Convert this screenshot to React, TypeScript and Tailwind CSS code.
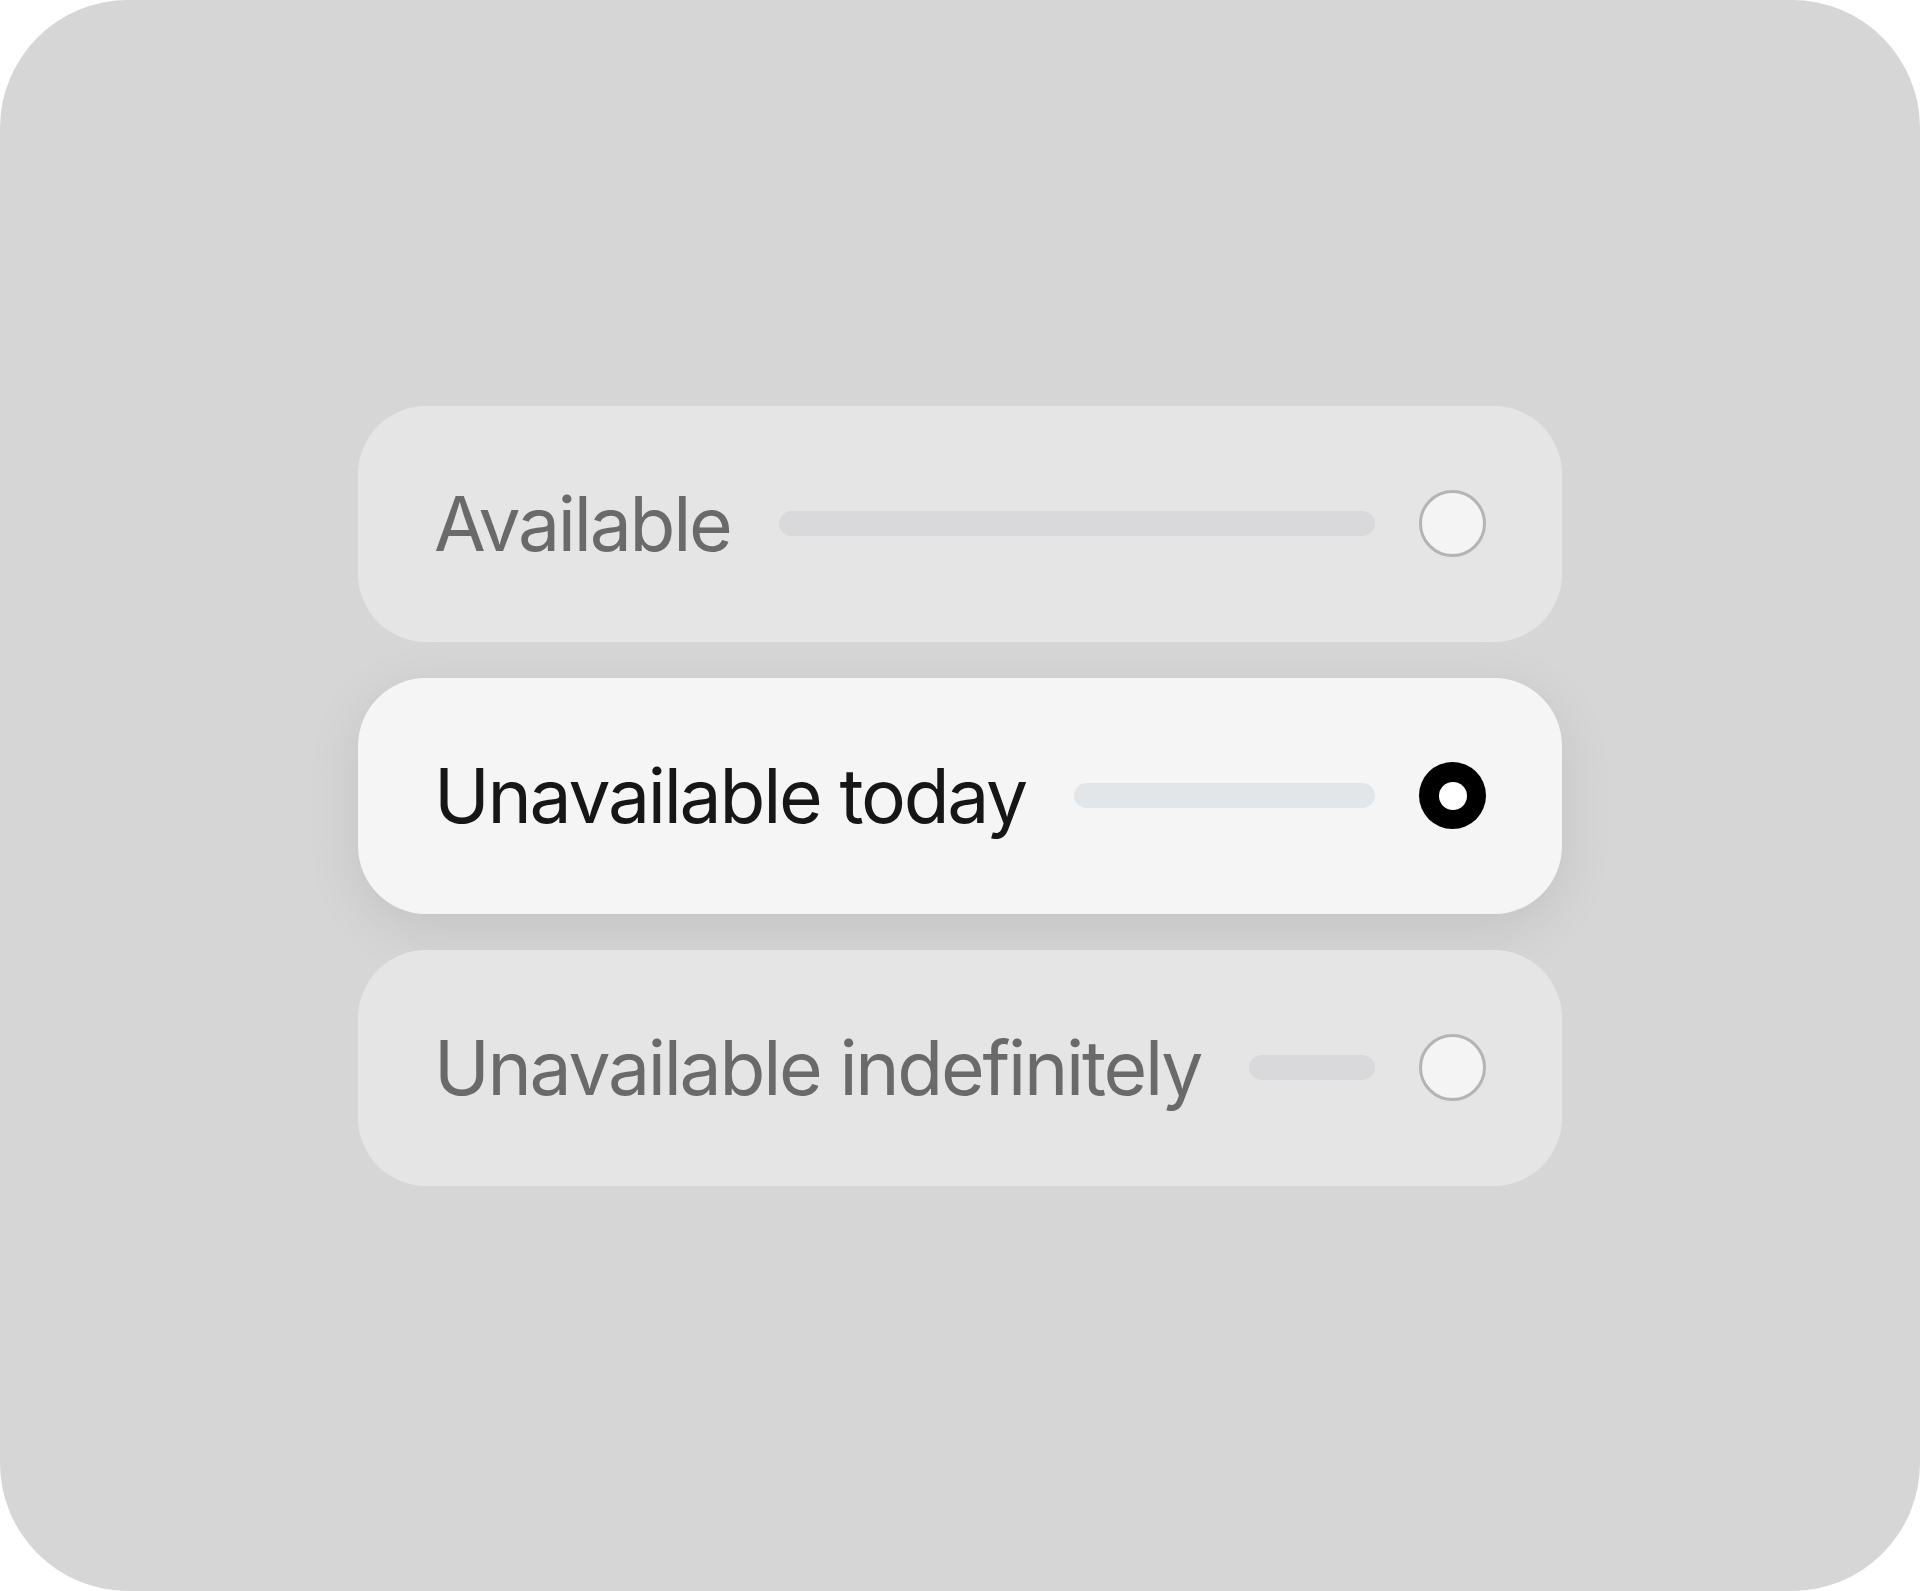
import React from "react";

type Opt = { label: string; selected: boolean };

const options: Opt[] = [
  { label: "Available", selected: false },
  { label: "Unavailable today", selected: true },
  { label: "Unavailable indefinitely", selected: false },
];

function Row({ label, selected }: Opt) {
  return (
    <div
      className={
        selected
          ? "flex h-[236px] items-center rounded-[68px] bg-[#f5f5f5] px-[76px] shadow-[0_14px_56px_rgba(0,0,0,0.09)]"
          : "flex h-[236px] items-center rounded-[68px] bg-[#e5e5e5] px-[76px]"
      }
    >
      <span
        className={
          selected
            ? "whitespace-nowrap text-[75px] leading-none tracking-[-0.03em] text-[#161616]"
            : "whitespace-nowrap text-[75px] leading-none tracking-[-0.03em] text-[#6a6a6a]"
        }
        style={{ fontFamily: "Inter, 'Liberation Sans', sans-serif" }}
      >
        {label}
      </span>
      <div
        className={
          selected
            ? "ml-[48px] h-[25px] flex-1 rounded-full bg-[#e3e6e9]"
            : "ml-[48px] h-[25px] flex-1 rounded-full bg-[#d9d9db]"
        }
      />
      {selected ? (
        <div className="ml-[44px] flex h-[67px] w-[67px] shrink-0 items-center justify-center rounded-full bg-black">
          <div className="h-[28px] w-[28px] rounded-full bg-white" />
        </div>
      ) : (
        <div className="ml-[44px] h-[67px] w-[67px] shrink-0 rounded-full border-[3px] border-[#b4b4b4] bg-[#f4f4f4]" />
      )}
    </div>
  );
}

export default function App() {
  return (
    <div className="h-[1591px] w-[1920px] bg-white">
      <div className="flex h-full w-full items-center justify-center rounded-[128px] bg-[#d6d6d6]">
        <div className="flex w-[1204px] flex-col gap-[36px]">
          {options.map((o) => (
            <Row key={o.label} {...o} />
          ))}
        </div>
      </div>
    </div>
  );
}
